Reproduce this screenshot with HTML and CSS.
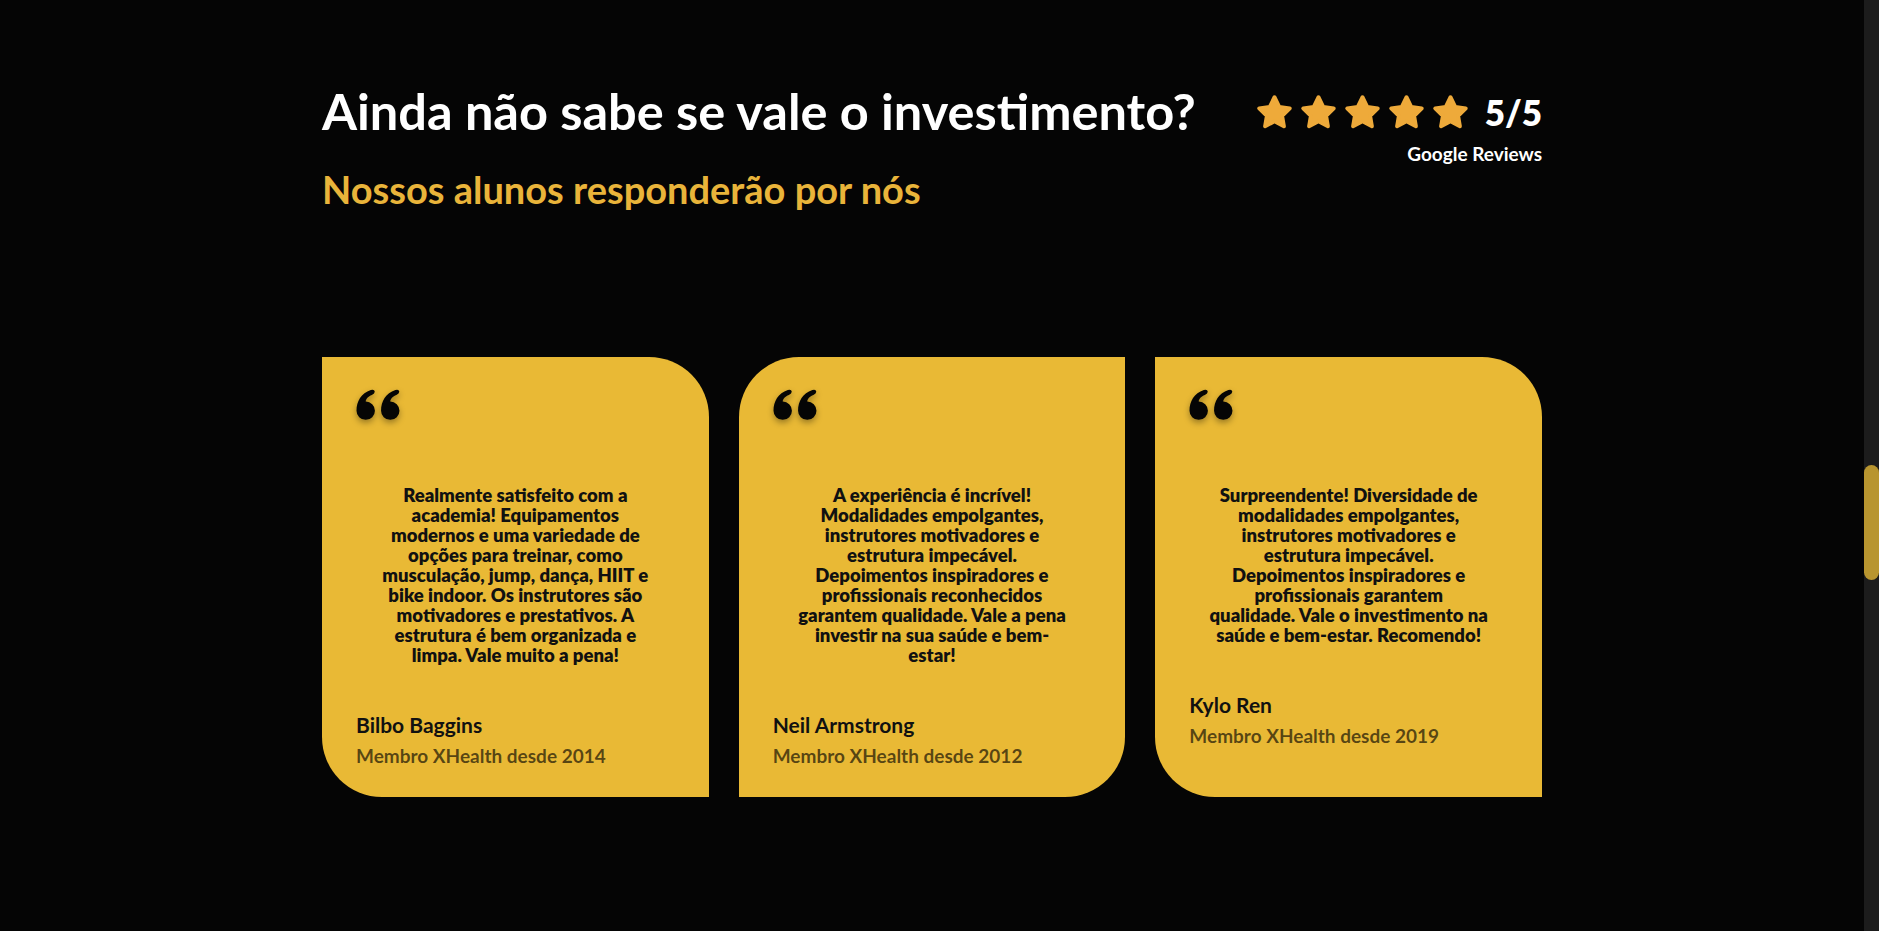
FILE: index.html
```html
<!DOCTYPE html>
<html lang="pt-BR">
<head>
<meta charset="utf-8">
<title>Depoimentos</title>
<link rel="stylesheet" href="styles.css">
</head>
<body>
<div class="viewport">
  <main class="page">
    <section class="testimonials">
      <header class="section-head">
        <div class="titles">
          <h1 class="title">Ainda não sabe se vale o investimento?</h1>
          <h2 class="subtitle">Nossos alunos responderão por nós</h2>
        </div>
        <div class="rating">
          <div class="rating-row">
            <div class="stars">
              <svg class="star" viewBox="0 0 24 24"><path d="M12 2.6l2.9 5.9 6.5.95-4.7 4.6 1.1 6.45L12 17.45l-5.8 3.05 1.1-6.45-4.7-4.6 6.5-.95z"/></svg>
              <svg class="star" viewBox="0 0 24 24"><path d="M12 2.6l2.9 5.9 6.5.95-4.7 4.6 1.1 6.45L12 17.45l-5.8 3.05 1.1-6.45-4.7-4.6 6.5-.95z"/></svg>
              <svg class="star" viewBox="0 0 24 24"><path d="M12 2.6l2.9 5.9 6.5.95-4.7 4.6 1.1 6.45L12 17.45l-5.8 3.05 1.1-6.45-4.7-4.6 6.5-.95z"/></svg>
              <svg class="star" viewBox="0 0 24 24"><path d="M12 2.6l2.9 5.9 6.5.95-4.7 4.6 1.1 6.45L12 17.45l-5.8 3.05 1.1-6.45-4.7-4.6 6.5-.95z"/></svg>
              <svg class="star" viewBox="0 0 24 24"><path d="M12 2.6l2.9 5.9 6.5.95-4.7 4.6 1.1 6.45L12 17.45l-5.8 3.05 1.1-6.45-4.7-4.6 6.5-.95z"/></svg>
            </div>
            <span class="score">5/5</span>
          </div>
          <span class="source">Google Reviews</span>
        </div>
      </header>

      <div class="cards">
        <article class="card card-a">
          <svg class="quote" viewBox="0 0 44 30"><path d="M9.5 12A9 9 0 0 1 9.5 30A9 9 0 0 1 0.5 21C0.5 12 5 4 14.5 0.8Q18 -0.2 18.3 2.3Q18.5 4.5 15.5 5.6C12 7 9.5 9.5 9.5 12Z"/><path transform="translate(24 0)" d="M9.5 12A9 9 0 0 1 9.5 30A9 9 0 0 1 0.5 21C0.5 12 5 4 14.5 0.8Q18 -0.2 18.3 2.3Q18.5 4.5 15.5 5.6C12 7 9.5 9.5 9.5 12Z"/></svg>
          <p class="text">Realmente satisfeito com a<br>academia! Equipamentos<br>modernos e uma variedade de<br>opções para treinar, como<br>musculação, jump, dança, HIIT e<br>bike indoor. Os instrutores são<br>motivadores e prestativos. A<br>estrutura é bem organizada e<br>limpa. Vale muito a pena!</p>
          <h3 class="name">Bilbo Baggins</h3>
          <span class="since">Membro XHealth desde 2014</span>
        </article>

        <article class="card card-b">
          <svg class="quote" viewBox="0 0 44 30"><path d="M9.5 12A9 9 0 0 1 9.5 30A9 9 0 0 1 0.5 21C0.5 12 5 4 14.5 0.8Q18 -0.2 18.3 2.3Q18.5 4.5 15.5 5.6C12 7 9.5 9.5 9.5 12Z"/><path transform="translate(24 0)" d="M9.5 12A9 9 0 0 1 9.5 30A9 9 0 0 1 0.5 21C0.5 12 5 4 14.5 0.8Q18 -0.2 18.3 2.3Q18.5 4.5 15.5 5.6C12 7 9.5 9.5 9.5 12Z"/></svg>
          <p class="text">A experiência é incrível!<br>Modalidades empolgantes,<br>instrutores motivadores e<br>estrutura impecável.<br>Depoimentos inspiradores e<br>profissionais reconhecidos<br>garantem qualidade. Vale a pena<br>investir na sua saúde e bem-<br>estar!</p>
          <h3 class="name">Neil Armstrong</h3>
          <span class="since">Membro XHealth desde 2012</span>
        </article>

        <article class="card card-a">
          <svg class="quote" viewBox="0 0 44 30"><path d="M9.5 12A9 9 0 0 1 9.5 30A9 9 0 0 1 0.5 21C0.5 12 5 4 14.5 0.8Q18 -0.2 18.3 2.3Q18.5 4.5 15.5 5.6C12 7 9.5 9.5 9.5 12Z"/><path transform="translate(24 0)" d="M9.5 12A9 9 0 0 1 9.5 30A9 9 0 0 1 0.5 21C0.5 12 5 4 14.5 0.8Q18 -0.2 18.3 2.3Q18.5 4.5 15.5 5.6C12 7 9.5 9.5 9.5 12Z"/></svg>
          <p class="text">Surpreendente! Diversidade de<br>modalidades empolgantes,<br>instrutores motivadores e<br>estrutura impecável.<br>Depoimentos inspiradores e<br>profissionais garantem<br>qualidade. Vale o investimento na<br>saúde e bem-estar. Recomendo!</p>
          <h3 class="name">Kylo Ren</h3>
          <span class="since">Membro XHealth desde 2019</span>
        </article>
      </div>
    </section>
  </main>
  <div class="scrollbar"><div class="thumb"></div></div>
</div>
</body>
</html>
```

FILE: styles.css
```css
* { box-sizing: border-box; }

html, body {
  margin: 0;
  padding: 0;
  height: 100%;
  background: #050505;
  font-family: Lato, "Noto Sans", sans-serif;
}

.viewport {
  display: flex;
  height: 100vh;
  overflow: hidden;
}

.page {
  flex: 1;
  min-width: 0;
}

.testimonials {
  width: 1220px;
  margin: 0 auto;
  padding-top: 81px;
}

.section-head {
  display: flex;
  justify-content: space-between;
  align-items: flex-start;
}

.title {
  margin: 0;
  color: #ffffff;
  font-size: 50.5px;
  font-weight: 700;
  line-height: 60px;
}

.subtitle {
  margin: 26px 0 0;
  color: #e9b43a;
  font-size: 38px;
  font-weight: 700;
  line-height: 44px;
}

.rating {
  display: flex;
  flex-direction: column;
  align-items: flex-end;
  padding-top: 11px;
}

.rating-row {
  display: flex;
  align-items: center;
  gap: 15px;
}

.stars {
  display: flex;
  gap: 5px;
}

.star {
  width: 39px;
  height: 39px;
  fill: #eeaa3a;
  stroke: #eeaa3a;
  stroke-width: 2.4;
  stroke-linejoin: round;
}

.score {
  color: #ffffff;
  font-size: 35px;
  font-weight: 800;
  line-height: 40px;
}

.source {
  margin-top: 11px;
  color: #ffffff;
  font-size: 19px;
  font-weight: 700;
  line-height: 22px;
}

.cards {
  display: grid;
  grid-template-columns: repeat(3, 1fr);
  gap: 30px;
  margin-top: 146px;
  align-items: stretch;
}

.card {
  background: #e9b935;
  padding: 32px 34px 30px 34px;
  display: flex;
  flex-direction: column;
}

.card-a { border-radius: 0 60px 0 60px; }
.card-b { border-radius: 60px 0 60px 0; }

.quote {
  width: 45px;
  height: 31px;
  fill: #050505;
  filter: drop-shadow(0 3px 3px rgba(0, 0, 0, 0.35));
}

.text {
  margin: 65px -8px 47px;
  text-align: center;
  color: #111;
  font-size: 18.5px;
  font-weight: 800;
  line-height: 20px;
}

.name {
  margin: 0;
  color: #111;
  font-size: 21px;
  font-weight: 700;
  line-height: 26px;
}

.since {
  margin-top: 7px;
  color: rgba(0, 0, 0, 0.64);
  font-size: 19px;
  font-weight: 700;
  line-height: 22px;
}

.scrollbar {
  width: 15px;
  flex: none;
  background: #1c1c1c;
}

.thumb {
  margin-top: 465px;
  height: 115px;
  border-radius: 8px;
  background: #b8952f;
}
```
